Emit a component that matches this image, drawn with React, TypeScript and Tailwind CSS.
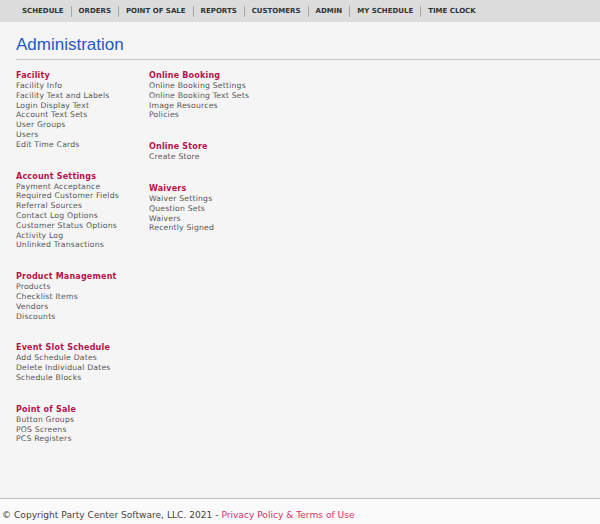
import React from 'react';

const NAV = ['Schedule', 'Orders', 'Point of Sale', 'Reports', 'Customers', 'Admin', 'My Schedule', 'Time Clock'];

type Section = { title: string; items: string[] };

const LEFT: Section[] = [
  { title: 'Facility', items: ['Facility Info', 'Facility Text and Labels', 'Login Display Text', 'Account Text Sets', 'User Groups', 'Users', 'Edit Time Cards'] },
  { title: 'Account Settings', items: ['Payment Acceptance', 'Required Customer Fields', 'Referral Sources', 'Contact Log Options', 'Customer Status Options', 'Activity Log', 'Unlinked Transactions'] },
  { title: 'Product Management', items: ['Products', 'Checklist Items', 'Vendors', 'Discounts'] },
  { title: 'Event Slot Schedule', items: ['Add Schedule Dates', 'Delete Individual Dates', 'Schedule Blocks'] },
  { title: 'Point of Sale', items: ['Button Groups', 'POS Screens', 'PCS Registers'] },
];

const RIGHT: Section[] = [
  { title: 'Online Booking', items: ['Online Booking Settings', 'Online Booking Text Sets', 'Image Resources', 'Policies'] },
  { title: 'Online Store', items: ['Create Store'] },
  { title: 'Waivers', items: ['Waiver Settings', 'Question Sets', 'Waivers', 'Recently Signed'] },
];

const AdminSection: React.FC<{ section: Section }> = ({ section }) => (
  <div className="mb-[22px]">
    <h3 className="text-[8px] font-bold text-[#b5134b] leading-[10px] tracking-[0.2px]">{section.title}</h3>
    <ul>
      {section.items.map((item) => (
        <li key={item} className="text-[7.7px] leading-[9.8px] text-[#555] tracking-[0.2px]">
          {item}
        </li>
      ))}
    </ul>
  </div>
);

export default function App() {
  return (
    <div className="w-[600px] h-[524px] flex flex-col bg-[#f5f5f5] font-['DejaVu_Sans',Verdana,sans-serif] overflow-hidden">
      <nav className="h-[22px] bg-[#dcdcdc] flex items-center pl-[22px]">
        {NAV.map((label, i) => (
          <React.Fragment key={label}>
            {i > 0 && <span className="mx-[7px] w-px h-[11px] bg-[#a8a8a8]" />}
            <span className="text-[7px] font-bold uppercase text-[#333]">{label}</span>
          </React.Fragment>
        ))}
      </nav>

      <div className="pl-4 pt-[13px]">
        <h1 className="font-['Liberation_Sans',Arial,sans-serif] text-[17px] leading-[20px] text-[#2159c6]">Administration</h1>
        <div className="mt-[4px] h-px bg-[#c8c8c8]" />
      </div>

      <div className="flex pl-4 pt-[11px] flex-1">
        <div className="w-[133px]">
          {LEFT.map((s) => <AdminSection key={s.title} section={s} />)}
        </div>
        <div>
          {RIGHT.map((s) => <AdminSection key={s.title} section={s} />)}
        </div>
      </div>

      <footer className="border-t border-[#bdbdbd] h-[26px] bg-[#fafafa] pt-[11px] pl-[2px] text-[9.1px] leading-[11px] text-[#444]">
        <span>© Copyright Party Center Software, LLC. 2021 - </span>
        <span className="text-[#d4316a]">Privacy Policy &amp; Terms of Use</span>
      </footer>
    </div>
  );
}
